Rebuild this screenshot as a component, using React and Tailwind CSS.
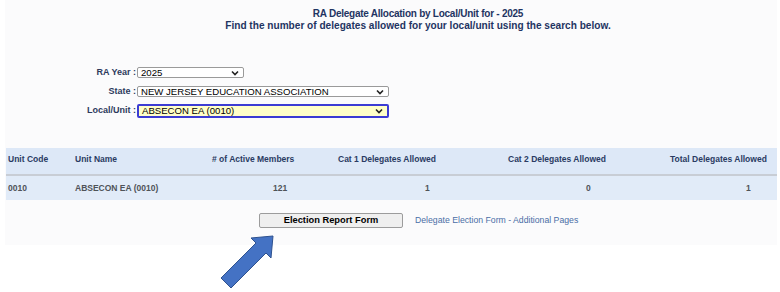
import React from "react";

function FakeSelect({ width, value, focus }) {
  return (
    <div
      className={
        "flex items-center justify-between rounded-[2px] pl-[3px] pr-[4px] text-[9.6px] font-normal leading-none text-black " +
        (focus
          ? "h-[14px] border-2 border-[#3c3cd4] bg-[#ffffc8]"
          : "h-[11px] border border-[#9a9a9a] bg-white")
      }
      style={{ width }}
    >
      <span>{value}</span>
      <svg width="8" height="6" viewBox="0 0 8 6">
        <path d="M1 1.5 L4 4.5 L7 1.5" fill="none" stroke="#222" strokeWidth="1.6" />
      </svg>
    </div>
  );
}

export default function App() {
  const font = { fontFamily: '"Liberation Sans", Arial, sans-serif' };
  return (
    <div className="relative h-[292px] w-[780px] overflow-hidden bg-white" style={font}>
      <div className="ml-[5px] h-[245px] w-[772px] bg-[#fbfbfc] pt-[8px]">
        <div className="pl-[54px] text-center font-bold text-[#1f3462]">
          <div className="text-[10px] leading-[12px] tracking-[-0.25px]">RA Delegate Allocation by Local/Unit for - 2025</div>
          <div className="text-[10.1px] leading-[12px]">Find the number of delegates allowed for your local/unit using the search below.</div>
        </div>

        <div className="mt-[35px] flex flex-col text-[9px] font-bold text-[#2d3a5c]">
          <div className="flex h-[11px] items-center">
            <div className="w-[132px] pr-[1px] text-right">RA Year :</div>
            <FakeSelect width="107px" value="2025" />
          </div>
          <div className="mt-[8px] flex h-[11px] items-center">
            <div className="w-[132px] pr-[1px] text-right">State :</div>
            <FakeSelect width="252px" value="NEW JERSEY EDUCATION ASSOCIATION" />
          </div>
          <div className="mt-[7px] flex h-[14px] items-center">
            <div className="w-[132px] pr-[1px] text-right">Local/Unit :</div>
            <FakeSelect width="252px" value="ABSECON EA (0010)" focus />
          </div>
        </div>

        <div className="ml-[1px] mt-[30px] text-[8.5px] font-bold">
          <div className="flex h-[28px] items-center border-b-2 border-[#c8cdd5] bg-[#dde8f7] pb-[3px] text-[#2a3b63]">
            <div className="w-[69px] pl-[2px]">Unit Code</div>
            <div className="w-[137px]">Unit Name</div>
            <div className="w-[126px]">
              <span># of Active Members</span>
            </div>
            <div className="w-[170px]">Cat 1 Delegates Allowed</div>
            <div className="w-[162px]">Cat 2 Delegates Allowed</div>
            <div className="w-[107px]">Total Delegates Allowed</div>
          </div>
          <div className="flex h-[24px] items-center bg-[#e1ebf8] text-[#4f5358]">
            <div className="w-[69px] pl-[2px]">0010</div>
            <div className="w-[137px]">ABSECON EA (0010)</div>
            <div className="w-[126px] pl-[61px]">121</div>
            <div className="w-[170px] pl-[87px]">1</div>
            <div className="w-[162px] pl-[78px]">0</div>
            <div className="w-[107px] pl-[76px]">1</div>
          </div>
        </div>

        <div className="mt-[13px] flex items-center pl-[254px]">
          <div className="flex h-[15px] w-[144px] items-center justify-center rounded-[2px] border border-[#9c9c9c] bg-[#efefef] text-[9.3px] font-bold text-black">
            Election Report Form
          </div>
          <div className="ml-[12px] text-[8.7px] text-[#4a6ea6]">Delegate Election Form - Additional Pages</div>
        </div>
      </div>

      <svg className="absolute left-0 top-0" width="780" height="292" viewBox="0 0 780 292">
        <path
          d="M273 236 L271 258 L266 253 L231 288 L221 278 L256 243 L251 238 Z"
          fill="#4472c4"
          stroke="#2f528f"
          strokeWidth="1"
          strokeLinejoin="miter"
        />
      </svg>
    </div>
  );
}
